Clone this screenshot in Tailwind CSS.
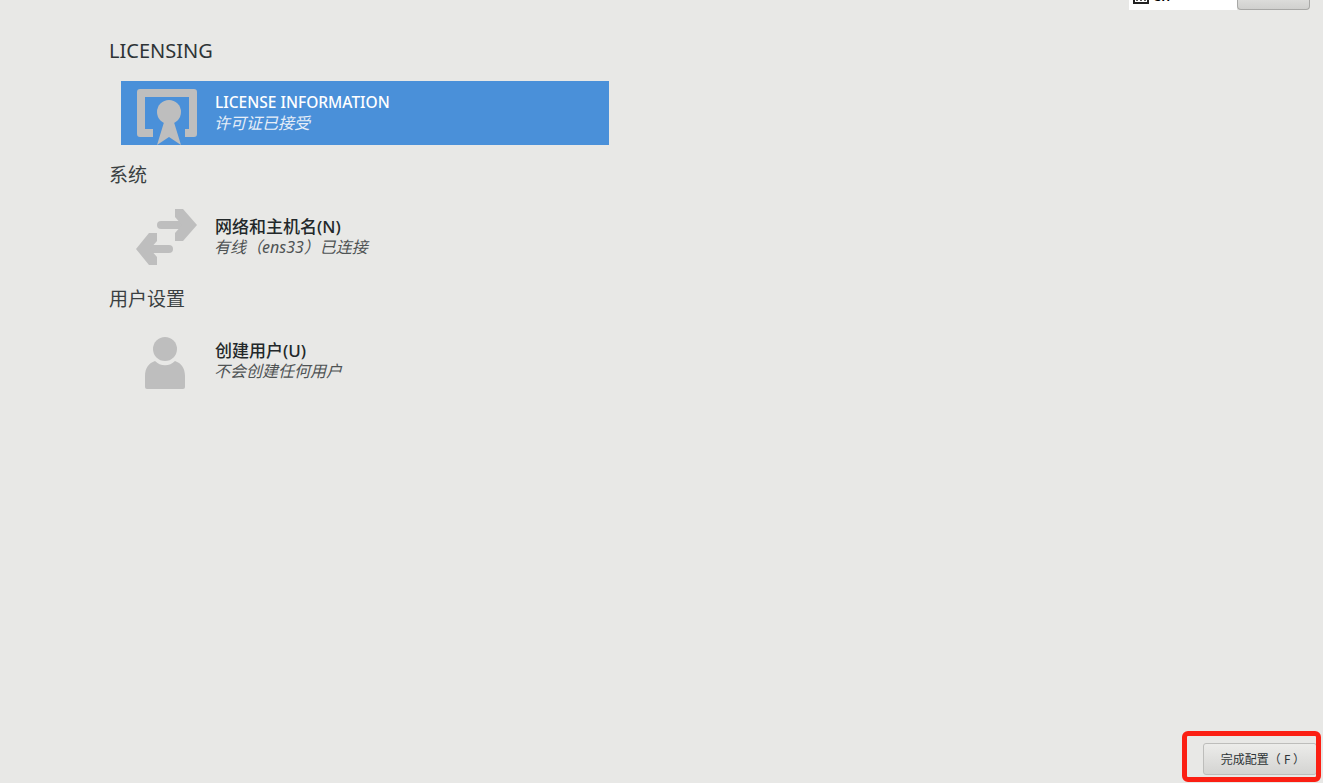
<!DOCTYPE html>
<html lang="zh-CN">
<head>
<meta charset="utf-8">
<script src="https://cdn.jsdelivr.net/npm/@tailwindcss/browser@4"></script>
</head>
<body class="m-0">
<div class="relative flex h-[783px] w-[1323px] flex-col overflow-hidden bg-[#e8e8e6] font-['Noto_Sans','Noto_Sans_CJK_SC',sans-serif] text-[#2e3436]">
  <!-- top strip -->
  <div class="flex h-[10px] shrink-0 justify-end pr-[13px]">
    <div class="relative flex h-[10px] w-[108px] items-end overflow-hidden bg-white pl-[4px]">
      <svg class="absolute left-[4px] top-[-12px]" width="16" height="16" viewBox="0 0 16 16"><path d="M1 1h14v14H1z" fill="none" stroke="#222" stroke-width="2"/><path d="M4 6v7M8 6v7M12 6v7" stroke="#222" stroke-width="1.5"/></svg>
      <span class="absolute left-[24px] top-[-14px] text-[14px] leading-[20px] font-semibold text-black">en</span>
    </div>
    <div class="h-[10px] w-[73px] rounded-b-[4px] border-x border-b border-[#a8a8a6] bg-gradient-to-b from-[#dcdcda] to-[#d0d0ce]"></div>
  </div>

  <main class="flex flex-col pl-[109px] pt-[11px]">
    <h2 class="flex h-[60px] items-center text-[20px] font-normal text-[#2e3436]">LICENSING</h2>
    <div class="ml-[12px] flex h-[64px] w-[488px] items-center gap-[18px] bg-[#4a90d9] pl-[16px] text-white">
      <svg class="shrink-0" width="60" height="64" viewBox="0 0 60 64">
        <path d="M3 8h54a3 3 0 0 1 3 3v42a3 3 0 0 1-3 3H48v-8h4V16H8v32h8v8H3a3 3 0 0 1-3-3V11a3 3 0 0 1 3-3z" fill="#bebebe"/>
        <circle cx="32" cy="31" r="12" fill="#bebebe"/>
        <path d="M28 38h8l8 26-12-8-12 8z" fill="#bebebe"/>
      </svg>
      <div class="flex flex-col">
        <span class="text-[15.5px] leading-[21px] font-medium">LICENSE INFORMATION</span>
        <span class="-ml-px text-[16px] leading-[21px] italic text-[#e6eef8]">许可证已接受</span>
      </div>
    </div>

    <h2 class="flex h-[60px] items-center text-[19px] font-normal text-[#3a3f41]">系统</h2>
    <div class="ml-[12px] flex h-[64px] w-[488px] items-center gap-[18px] pl-[16px]">
      <svg class="shrink-0 overflow-visible" width="60" height="64" viewBox="0 0 60 64" fill="#bebebe">
        <rect x="20" y="16" width="32" height="8" rx="4"/>
        <path d="M38 4h8l14 16-14 16h-8v-8l7-8-7-8z"/>
        <rect x="8" y="40" width="28" height="8" rx="4"/>
        <path d="M12 28h8v8l-7 8 7 8v8h-8L-1 44z"/>
      </svg>
      <div class="flex flex-col">
        <span class="text-[17px] leading-[21px] font-medium text-[#23282a]">网络和主机名(N)</span>
        <span class="-ml-px text-[16px] leading-[21px] italic text-[#4f5354]">有线（ens33）已连接</span>
      </div>
    </div>

    <h2 class="flex h-[60px] items-center text-[19px] font-normal text-[#3a3f41]">用户设置</h2>
    <div class="ml-[12px] flex h-[64px] w-[488px] items-center gap-[18px] pl-[16px]">
      <svg class="shrink-0" width="60" height="64" viewBox="0 0 60 64" fill="#bebebe">
        <circle cx="28" cy="20" r="12"/>
        <path d="M8 47c0-8 4-13 10-15a14 14 0 0 0 20 0c6 2 10 7 10 15v11a2 2 0 0 1-2 2H10a2 2 0 0 1-2-2z"/>
      </svg>
      <div class="flex flex-col">
        <span class="text-[17px] leading-[21px] font-medium text-[#23282a]">创建用户(U)</span>
        <span class="-ml-px text-[16px] leading-[21px] italic text-[#4f5354]">不会创建任何用户</span>
      </div>
    </div>
  </main>

  <footer class="mt-auto flex justify-end pb-[8px] pr-[6px]">
    <button class="flex h-[32px] w-[114px] items-center justify-center rounded-[3px] border border-[#bdbdbb] bg-gradient-to-b from-[#ececea] to-[#d4d4d2] pl-[6px] pt-[1px] text-[12px] text-[#2e3436]">完成配置（<span class="px-[3px]">F</span>）</button>
  </footer>

  <!-- annotation -->
  <div class="pointer-events-none absolute left-[1182px] top-[731px] h-[51px] w-[139px] rounded-[6px] border-[5px] border-[#fb1f13]"></div>
</div>
</body>
</html>
